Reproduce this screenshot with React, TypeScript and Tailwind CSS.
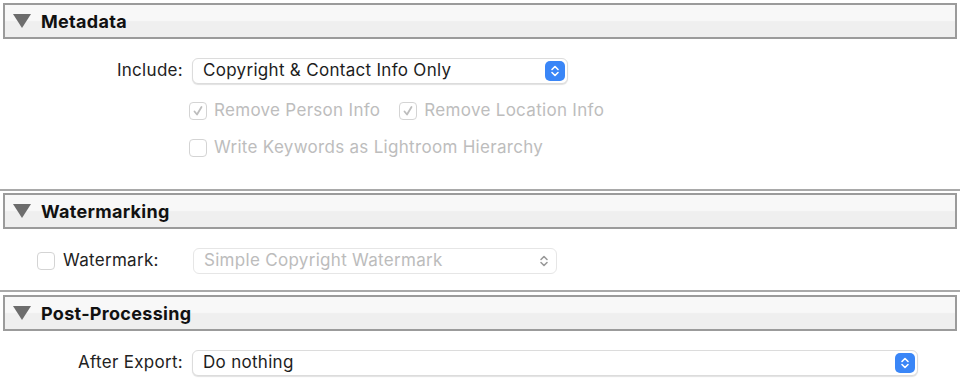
import React from "react";

const Triangle = () => (
  <svg width="18" height="14" viewBox="0 0 18 14" className="shrink-0">
    <polygon points="0,0 18,0 9,14" fill="#6d6d6d" />
  </svg>
);

const SectionHeader = ({ title }: { title: string }) => (
  <div className="mx-[3px] h-[36px] border-2 border-[#9b9b9b] bg-[linear-gradient(to_bottom,#f8f8f8_0%,#f8f8f8_48%,#efefef_52%,#efefef_100%)] flex items-center gap-[10px] pl-[8px]">
    <Triangle />
    <span className="text-[18px] font-bold text-[#111]">{title}</span>
  </div>
);

const Separator = ({ gap }: { gap: string }) => (
  <div className={`h-[2px] bg-[#a9a9a9] ${gap}`} />
);

const Stepper = ({ disabled }: { disabled?: boolean }) => (
  <div
    className={
      disabled
        ? "w-[20px] h-[20px] flex items-center justify-center"
        : "w-[20px] h-[20px] rounded-[5px] bg-[#3a86f7] flex items-center justify-center"
    }
  >
    <svg width="10" height="14" viewBox="0 0 10 14">
      <path
        d="M2 5.5 L5 2.5 L8 5.5 M2 8.5 L5 11.5 L8 8.5"
        fill="none"
        stroke={disabled ? "#9a9a9a" : "#ffffff"}
        strokeWidth="1.6"
        strokeLinecap="round"
        strokeLinejoin="round"
      />
    </svg>
  </div>
);

const Select = ({
  value,
  width,
  disabled,
}: {
  value: string;
  width: string;
  disabled?: boolean;
}) => (
  <div
    className={`${width} h-[26px] rounded-[6px] bg-white flex items-center justify-between pl-[10px] pr-[2px] ${
      disabled
        ? "border border-[#e6e6e6] text-[#bcbcbc]"
        : "border border-[#dcdcdc] shadow-[0_1px_1px_rgba(0,0,0,0.12)] text-[#1d1d1d]"
    }`}
  >
    <span>{value}</span>
    <Stepper disabled={disabled} />
  </div>
);

const Checkbox = ({ checked }: { checked?: boolean }) => (
  <div className="w-[18px] h-[18px] rounded-[4px] border border-[#d4d4d4] bg-white flex items-center justify-center shrink-0">
    {checked && (
      <svg width="12" height="12" viewBox="0 0 12 12">
        <path
          d="M2.5 6.5 L5 9.5 L9.5 2"
          fill="none"
          stroke="#bdbdbd"
          strokeWidth="1.8"
          strokeLinecap="round"
          strokeLinejoin="round"
        />
      </svg>
    )}
  </div>
);

export default function App() {
  return (
    <div className="w-[960px] h-[380px] bg-white overflow-hidden pt-[3px] font-['Inter','Liberation_Sans',sans-serif] text-[17px] tracking-[0.3px] text-[#222]">
      <SectionHeader title="Metadata" />
      <div className="h-[150px] flex flex-col pt-[19px]">
        <div className="h-[26px] flex items-center">
          <div className="w-[183px] text-right">Include:</div>
          <div className="ml-[9px]">
            <Select value="Copyright & Contact Info Only" width="w-[376px]" />
          </div>
        </div>
        <div className="h-[26px] flex items-center ml-[189px] mt-[14px] text-[#bdbdbd]">
          <Checkbox checked />
          <span className="ml-[7px]">Remove Person Info</span>
          <div className="ml-[19px]">
            <Checkbox checked />
          </div>
          <span className="ml-[7px]">Remove Location Info</span>
        </div>
        <div className="h-[26px] flex items-center ml-[189px] mt-[11px] text-[#bdbdbd]">
          <Checkbox />
          <span className="ml-[7px]">Write Keywords as Lightroom Hierarchy</span>
        </div>
      </div>
      <Separator gap="mb-[2px]" />
      <SectionHeader title="Watermarking" />
      <div className="h-[61px] pt-[19px]">
        <div className="h-[26px] flex items-center">
          <div className="ml-[37px]">
            <Checkbox />
          </div>
          <span className="ml-[8px] w-[130px]">Watermark:</span>
          <Select value="Simple Copyright Watermark" width="w-[364px]" disabled />
        </div>
      </div>
      <Separator gap="mb-[3px]" />
      <SectionHeader title="Post-Processing" />
      <div className="pt-[19px]">
        <div className="h-[26px] flex items-center">
          <div className="w-[183px] text-right">After Export:</div>
          <div className="ml-[9px]">
            <Select value="Do nothing" width="w-[726px]" />
          </div>
        </div>
      </div>
    </div>
  );
}
